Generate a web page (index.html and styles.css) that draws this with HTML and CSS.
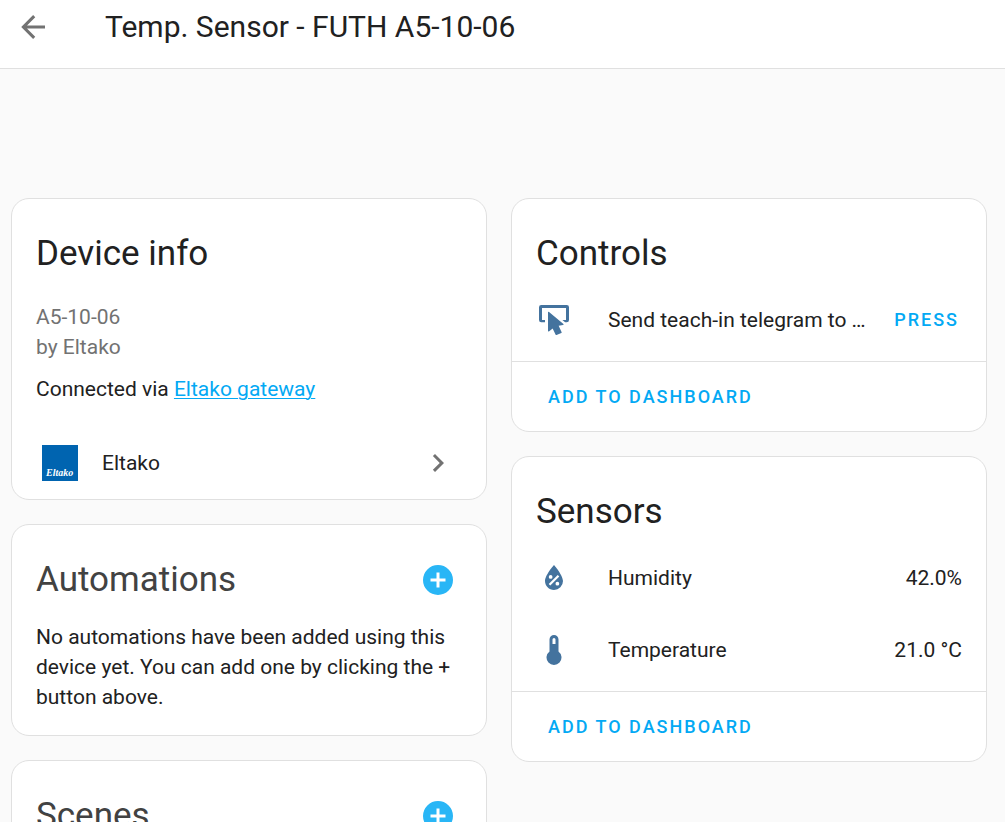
FILE: index.html
```html
<!DOCTYPE html>
<html lang="en">
<head>
<meta charset="utf-8">
<meta name="viewport" content="width=device-width, initial-scale=1">
<title>Temp. Sensor - FUTH A5-10-06</title>
<link rel="stylesheet" href="styles.css">
</head>
<body>
<div class="page">
  <header class="toolbar">
    <button class="icon-button" type="button" aria-label="Back">
      <svg class="icon" viewBox="0 0 24 24"><path d="M20,11V13H8L13.5,18.5L12.08,19.92L4.16,12L12.08,4.08L13.5,5.5L8,11H20Z"/></svg>
    </button>
    <h1 class="toolbar-title">Temp. Sensor - FUTH A5-10-06</h1>
  </header>
  <main class="content">
    <div class="column">
      <section class="card info">
        <h2 class="card-title">Device info</h2>
        <div class="model">A5-10-06</div>
        <div class="model">by Eltako</div>
        <div class="via">Connected via <a class="link" href="#gateway">Eltako gateway</a></div>
        <a class="integration" href="#eltako">
          <svg class="brand" viewBox="0 0 36 36" aria-hidden="true"><rect width="36" height="36" fill="#0064b0"/><text class="brand-text" x="4" y="31">Eltako</text></svg>
          <span class="integration-name">Eltako</span>
          <svg class="icon chevron" viewBox="0 0 24 24"><path d="M8.59,16.58L13.17,12L8.59,7.41L10,6L16,12L10,18L8.59,16.58Z"/></svg>
        </a>
      </section>
      <section class="card related">
        <div class="card-head">
          <h2 class="card-title soft">Automations</h2>
          <button class="icon-button add" type="button" aria-label="Add automation">
            <svg class="icon" viewBox="0 0 24 24"><path d="M17,13H13V17H11V13H7V11H11V7H13V11H17M12,2A10,10 0 0,0 2,12A10,10 0 0,0 12,22A10,10 0 0,0 22,12A10,10 0 0,0 12,2Z"/></svg>
          </button>
        </div>
        <p class="note">No automations have been added using this device yet. You can add one by clicking the + button above.</p>
      </section>
      <section class="card related">
        <div class="card-head">
          <h2 class="card-title soft">Scenes</h2>
          <button class="icon-button add" type="button" aria-label="Add scene">
            <svg class="icon" viewBox="0 0 24 24"><path d="M17,13H13V17H11V13H7V11H11V7H13V11H17M12,2A10,10 0 0,0 2,12A10,10 0 0,0 12,22A10,10 0 0,0 22,12A10,10 0 0,0 12,2Z"/></svg>
          </button>
        </div>
      </section>
    </div>
    <div class="column">
      <section class="card">
        <h2 class="card-title">Controls</h2>
        <div class="rows">
          <div class="row">
            <svg class="icon state" viewBox="0 0 24 24"><path d="M3.5,2H20.5A1.5,1.5 0 0,1 22,3.5V12A1.5,1.5 0 0,1 20.5,13.5H19.4L17.6,12H20V4H4V12H6V13.5H3.5A1.5,1.5 0 0,1 2,12V3.5A1.5,1.5 0 0,1 3.5,2Z"/><path d="M8,6.9Q8,6.1 8.7,6.7L18.3,14.6Q18.7,15.2 18,15.3L15.1,15.9L17.1,20.2Q17.2,20.5 16.9,20.7L13.7,22Q13.3,22.1 13.1,21.8L11.1,17.6L8.8,19.5Q8,20 8,19.2Z"/></svg>
            <span class="name">Send teach-in telegram to gateway</span>
            <button class="text-button press" type="button">PRESS</button>
          </div>
        </div>
        <div class="actions"><button class="text-button" type="button">ADD TO DASHBOARD</button></div>
      </section>
      <section class="card">
        <h2 class="card-title">Sensors</h2>
        <div class="rows">
          <div class="row">
            <svg class="icon state" viewBox="0 0 24 24"><path d="M12,3.25C12,3.25 6,10 6,14C6,17.32 8.69,20 12,20A6,6 0 0,0 18,14C18,10 12,3.25 12,3.25M14.47,9.97L15.53,11.03L9.53,17.03L8.47,15.97M9.75,10A1.25,1.25 0 0,1 11,11.25A1.25,1.25 0 0,1 9.75,12.5A1.25,1.25 0 0,1 8.5,11.25A1.25,1.25 0 0,1 9.75,10M14.25,14.5A1.25,1.25 0 0,1 15.5,15.75A1.25,1.25 0 0,1 14.25,17A1.25,1.25 0 0,1 13,15.75A1.25,1.25 0 0,1 14.25,14.5Z"/></svg>
            <span class="name">Humidity</span>
            <span class="value">42.0%</span>
          </div>
          <div class="row">
            <svg class="icon state" viewBox="0 0 24 24"><path d="M15 13V5A3 3 0 0 0 9 5V13A5 5 0 1 0 15 13M12 4A1 1 0 0 1 13 5V8H11V5A1 1 0 0 1 12 4Z"/></svg>
            <span class="name">Temperature</span>
            <span class="value">21.0 °C</span>
          </div>
        </div>
        <div class="actions"><button class="text-button" type="button">ADD TO DASHBOARD</button></div>
      </section>
    </div>
  </main>
</div>
</body>
</html>
```

FILE: styles.css
```css
* { box-sizing: border-box; }
body {
  margin: 0;
  background: #fafafa;
  color: #212121;
  font: 400 21px/30px Roboto, "Noto Sans", sans-serif;
}
h1, h2, p { margin: 0; font-weight: 400; }
button { border: 0; padding: 0; background: none; font: inherit; cursor: pointer; }
.page { height: 100vh; overflow: hidden; }
.toolbar {
  display: flex;
  align-items: center;
  padding: 3px 15px 17px;
  background: #fff;
  border-bottom: 1px solid #e0e0e0;
}
.icon { display: block; width: 36px; height: 36px; fill: currentColor; flex: none; }
.icon-button { color: #727272; }
.toolbar-title { margin-left: 54px; font-size: 30px; line-height: 48px; }
.content {
  display: grid;
  grid-template-columns: 1fr 1fr;
  align-items: start;
  gap: 24px;
  padding: 129px 18px 24px 11px;
}
.column { display: grid; gap: 24px; min-width: 0; }
.card {
  min-width: 0;
  background: #fff;
  border: 1px solid #e0e0e0;
  border-radius: 18px;
  padding-top: 31px;
}
.card-title { padding: 0 24px; font-size: 35px; line-height: 48px; }
.soft { color: #424242; }
.info .card-title { margin-bottom: 24px; }
.model { padding: 0 24px; color: #727272; }
.via { padding: 0 24px; margin: 12px 0 23px; }
.link { color: #03a9f4; text-decoration: underline; text-underline-offset: 2px; text-decoration-thickness: 1px; }
.integration {
  display: flex;
  align-items: center;
  height: 72px;
  padding: 0 30px;
  color: inherit;
  text-decoration: none;
}
.brand { width: 36px; height: 36px; margin-right: 24px; }
.brand-text { fill: #fff; font: italic 700 10px "Liberation Serif", serif; }
.integration-name { flex: 1; }
.chevron { color: #727272; }
.related { padding-bottom: 23px; }
.card-head { display: flex; justify-content: space-between; align-items: center; padding-right: 30px; }
.add { color: #29b6f6; }
.note { padding: 0 24px; margin-top: 18px; }
.rows { display: grid; gap: 24px; padding: 18px 24px 17px; }
.row { display: flex; align-items: center; min-width: 0; height: 48px; }
.state { color: #44739e; }
.name {
  flex: 1;
  min-width: 0;
  margin-left: 36px;
  overflow: hidden;
  text-overflow: ellipsis;
  white-space: nowrap;
}
.value { margin-left: 24px; white-space: nowrap; }
.text-button {
  color: #03a9f4;
  font-size: 18px;
  font-weight: 500;
  line-height: 48px;
  letter-spacing: 2px;
}
.press { margin: 0 3px 0 24px; }
.actions { border-top: 1px solid #e0e0e0; padding: 11px 36px 10px; display: flex; }
```
